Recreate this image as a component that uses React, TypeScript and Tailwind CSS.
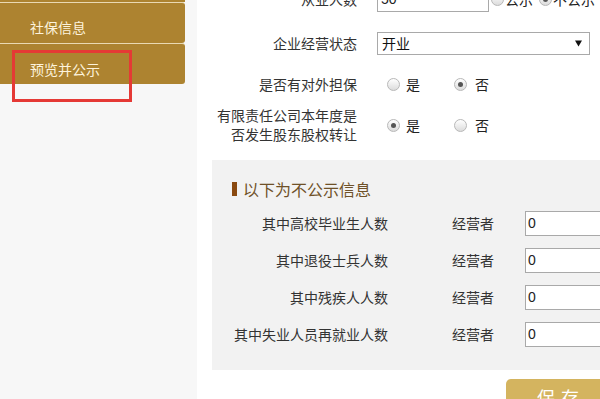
import React from "react";

const font = { fontFamily: '"Noto Sans CJK SC", "Noto Sans", sans-serif' };

function Radio({ checked }: { checked?: boolean }) {
  return (
    <span className="flex h-[13px] w-[13px] shrink-0 items-center justify-center rounded-full border border-[#b8b8b8] bg-gradient-to-b from-[#ffffff] to-[#dcdcdc]">
      {checked ? <span className="h-[5px] w-[5px] rounded-full bg-[#555]" /> : null}
    </span>
  );
}

function YesNo({ yes }: { yes: boolean }) {
  return (
    <div className="flex items-center">
      <Radio checked={yes} />
      <span className="ml-[6px] w-[48px] text-[14px] text-[#222]">是</span>
      <Radio checked={!yes} />
      <span className="ml-[8px] text-[14px] text-[#222]">否</span>
    </div>
  );
}

function PanelRow({ label }: { label: string }) {
  return (
    <div className="flex h-[25px] items-center whitespace-nowrap">
      <span className="w-[176px] shrink-0 text-right text-[14px] text-[#333]">{label}</span>
      <span className="ml-[64px] w-[42px] shrink-0 text-[14px] text-[#333]">经营者</span>
      <div className="ml-[31px] flex h-[25px] w-[120px] shrink-0 items-center border border-[#a9a9a9] bg-white pl-[2px] text-[14px] text-[#222]" style={{ fontFamily: '"Liberation Sans", Arial, sans-serif' }}>
        0
      </div>
    </div>
  );
}

export default function App() {
  return (
    <div className="relative flex h-[399px] w-[600px] overflow-hidden bg-white" style={font}>
      <aside className="w-[197px] shrink-0 bg-[#f7f7f7]">
        <div className="h-[2px] w-[185px] bg-[#ad8330]" />
        <div className="h-[41px] w-[185px] rounded-br-[3px] rounded-tr-[3px] border-t border-[#ead9b3] bg-[#ad8330] pl-[30px] pt-[14px] text-[14px] leading-[20px] text-[#fdf3dc]">
          社保信息
        </div>
        <div className="h-[41px] w-[185px] rounded-br-[3px] rounded-tr-[3px] border-t border-[#ead9b3] bg-[#ad8330] pl-[30px] pt-[15px] text-[14px] leading-[20px] text-[#fdf3dc]">
          预览并公示
        </div>
      </aside>

      <main className="flex w-[480px] shrink-0 flex-col bg-white pl-[15px]">
        <div className="-mt-[13px] flex h-[25px] items-center whitespace-nowrap">
          <span className="w-[145px] shrink-0 text-right text-[14px] text-[#333]">从业人数</span>
          <div className="ml-[20px] flex h-[25px] w-[112px] shrink-0 items-center border border-[#a9a9a9] pl-[3px] text-[14px] text-[#222]" style={{ fontFamily: '"Liberation Sans", Arial, sans-serif' }}>
            50
          </div>
          <span className="ml-[2px]"><Radio /></span>
          <span className="ml-[1px] text-[14px] text-[#222]">公示</span>
          <span className="ml-[6px]"><Radio checked /></span>
          <span className="ml-[1px] text-[14px] text-[#222]">不公示</span>
        </div>

        <div className="mt-[20px] flex h-[23px] items-center">
          <span className="w-[145px] shrink-0 text-right text-[14px] text-[#333]">企业经营状态</span>
          <div className="ml-[20px] flex h-[23px] w-[213px] shrink-0 items-center justify-between border border-[#a9a9a9] pl-[4px] pr-[7px] text-[14px] text-[#111]">
            <span>开业</span>
            <svg width="7" height="7" viewBox="0 0 7 7"><path d="M0 0.5 H7 L3.5 6.5 Z" fill="#111" /></svg>
          </div>
        </div>

        <div className="mt-[19px] flex h-[20px] items-center">
          <span className="w-[145px] shrink-0 text-right text-[14px] text-[#333]">是否有对外担保</span>
          <div className="ml-[30px]"><YesNo yes={false} /></div>
        </div>

        <div className="mt-[12px] flex h-[38px] items-center">
          <span className="w-[145px] shrink-0 text-right text-[14px] leading-[19px] text-[#333]">
            有限责任公司本年度是
            <br />
            否发生股东股权转让
          </span>
          <div className="ml-[30px]"><YesNo yes /></div>
        </div>

        <section className="mt-[16px] w-[460px] bg-[#f2f2f2] pb-[23px] pl-[20px] pt-[19px]">
          <div className="flex h-[20px] items-center">
            <span className="h-[14px] w-[5px] bg-[#8a4a10]" />
            <span className="ml-[6px] text-[16px] text-[#6f5128]">以下为不公示信息</span>
          </div>
          <div className="-ml-[20px] mt-[12px] flex flex-col gap-[12px]">
            <PanelRow label="其中高校毕业生人数" />
            <PanelRow label="其中退役士兵人数" />
            <PanelRow label="其中残疾人人数" />
            <PanelRow label="其中失业人员再就业人数" />
          </div>
        </section>

        <div className="mt-[9px] pl-[294px]">
          <button className="h-[36px] w-[110px] rounded-[5px] bg-[#d4b45f] text-[18px] tracking-[6px] text-white">保存</button>
        </div>
      </main>

      <div className="absolute left-[12px] top-[50px] h-[52px] w-[120px] border-[3px] border-[#e53935]" />
    </div>
  );
}
